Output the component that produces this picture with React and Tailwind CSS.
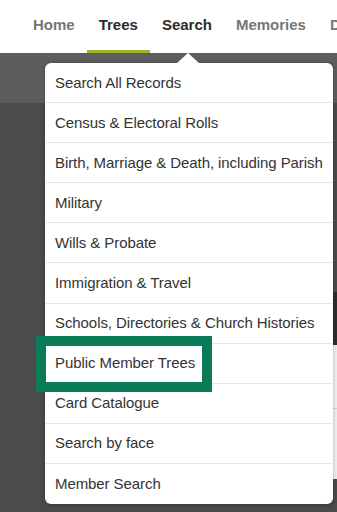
export default function App() {
  const items = [
    "Search All Records",
    "Census & Electoral Rolls",
    "Birth, Marriage & Death, including Parish",
    "Military",
    "Wills & Probate",
    "Immigration & Travel",
    "Schools, Directories & Church Histories",
    "Public Member Trees",
    "Card Catalogue",
    "Search by face",
    "Member Search",
  ];
  const nav = [
    { label: "Home", active: false, underline: false },
    { label: "Trees", active: true, underline: true },
    { label: "Search", active: true, underline: false },
    { label: "Memories", active: false, underline: false },
    { label: "DNA", active: false, underline: false },
  ];
  return (
    <div className="relative w-[337px] h-[512px] overflow-hidden bg-[#4b4b4b] font-['Liberation_Sans',Arial,sans-serif]">
      {/* Top navigation */}
      <nav className="flex h-[53px] bg-white pl-[21px] overflow-hidden whitespace-nowrap">
        {nav.map((n) => (
          <div
            key={n.label}
            className={
              n.underline
                ? "flex flex-col h-full px-[12px] pt-[16px] border-b-[3px] border-[#9db52a]"
                : "flex flex-col h-full px-[12px] pt-[16px] border-b-[3px] border-transparent"
            }
          >
            <span
              className={
                n.active
                  ? "text-[15px] leading-[18px] font-bold text-[#2b2b2b]"
                  : "text-[15px] leading-[18px] font-bold text-[#767676]"
              }
            >
              {n.label}
            </span>
          </div>
        ))}
      </nav>

      {/* Dimmed page behind */}
      <div className="h-[50px] bg-[#5d5d5d]" />
      <div className="flex justify-end">
        <div className="w-[4px] flex flex-col">
          <div className="h-[189px] bg-[#4b4b4b]" />
          <div className="h-[53px] bg-[#2e2e2e]" />
          <div className="h-[63px] bg-[#efefef]" />
          <div className="h-[1px] bg-[#cfcfcf]" />
          <div className="h-[70px] bg-[#efefef]" />
        </div>
      </div>

      {/* Dropdown menu */}
      <div className="absolute left-[45px] top-[63px] w-[288px] rounded-[6px] bg-white shadow-[0_1px_4px_rgba(0,0,0,0.25)]">
        <div className="absolute -top-[10px] left-[132px] w-0 h-0 border-l-[11px] border-r-[11px] border-b-[10px] border-l-transparent border-r-transparent border-b-white" />
        <ul className="flex flex-col">
          {items.map((it, i) => (
            <li
              key={it}
              className={
                i === items.length - 1
                  ? "h-[40.1px] flex items-center pl-[10px] text-[15px] leading-[18px] tracking-[-0.08px] text-[#333333] whitespace-nowrap"
                  : "h-[40.1px] flex items-center pl-[10px] text-[15px] leading-[18px] tracking-[-0.08px] text-[#333333] whitespace-nowrap border-b border-[#e6e6e6]"
              }
            >
              {it}
            </li>
          ))}
        </ul>
      </div>

      {/* Highlight annotation */}
      <div className="absolute left-[36px] top-[336px] w-[176px] h-[56px] border-[10px] border-[#087c59]" />
    </div>
  );
}
